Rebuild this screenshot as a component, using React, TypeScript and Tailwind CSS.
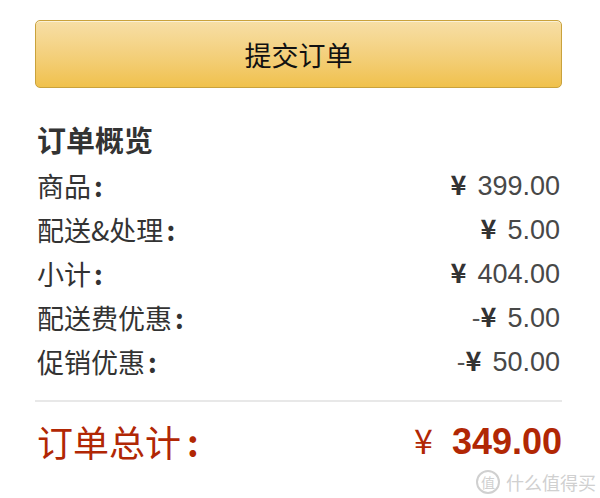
const cjk = "font-['Noto_Sans_CJK_SC',sans-serif]";
const num = "font-['Liberation_Sans','Noto_Sans_CJK_SC',sans-serif]";

type Line = { label: string; value: string; minus?: boolean };

const lines: Line[] = [
  { label: "商品", value: "399.00" },
  { label: "配送&处理", value: "5.00" },
  { label: "小计", value: "404.00" },
  { label: "配送费优惠", value: "5.00", minus: true },
  { label: "促销优惠", value: "50.00", minus: true },
];

function Row({ label, value, minus }: Line) {
  return (
    <div className="flex h-[44px] items-center justify-between">
      <span className={`${cjk} text-[27px] leading-none text-[#333]`}>
        {label}
        <span className="ml-[3px] font-bold">:</span>
      </span>
      <span className="flex items-baseline leading-none">
        {minus && <span className={`${num} text-[26px] text-[#555]`}>-</span>}
        <span className={`${cjk} text-[27px] font-bold text-[#333]`}>¥</span>
        <span className={`${num} ml-[11px] text-[27px] text-[#484848]`}>{value}</span>
      </span>
    </div>
  );
}

export default function App() {
  return (
    <div className="relative h-[498px] w-[600px] overflow-hidden bg-white">
      <div className="ml-[35px] w-[527px] pt-[20px]">
        <button className="flex h-[68px] w-full items-center justify-center rounded-[5px] border border-[#c9a23c] bg-linear-to-b from-[#f7dfa6] to-[#f0c14b] shadow-[inset_0_1px_0_rgba(255,255,255,0.55)]">
          <span className={`${cjk} text-[27px] leading-none text-[#111]`}>提交订单</span>
        </button>

        <div className="mt-[28px] px-[2px]">
          <div className="flex h-[47px] items-center">
            <span className={`${cjk} text-[29px] font-bold leading-none text-[#333]`}>订单概览</span>
          </div>
          {lines.map((l) => (
            <Row key={l.label} {...l} />
          ))}
        </div>

        <div className="mt-[17px] h-[2px] bg-[#e8e8e8]" />

        <div className="mt-[9px] flex h-[60px] items-center justify-between pl-[2px]">
          <span className={`${cjk} text-[36px] leading-none text-[#b12704]`}>
            订单总计
            <span className="ml-[6px] font-bold">:</span>
          </span>
          <span className="flex items-baseline leading-none text-[#b12704]">
            <span className={`${cjk} text-[34px]`}>¥</span>
            <span className={`${num} ml-[19px] text-[36px] font-bold`}>349.00</span>
          </span>
        </div>
      </div>

      {/* site watermark */}
      <div className="absolute bottom-[4px] right-[4px] flex items-center gap-[6px] text-[#d0d0d0]">
        <span className={`${cjk} flex h-[24px] w-[24px] items-center justify-center rounded-full border-2 border-[#d0d0d0] text-[14px] leading-none`}>
          值
        </span>
        <span className={`${cjk} text-[18px] leading-none`}>什么值得买</span>
      </div>
    </div>
  );
}
